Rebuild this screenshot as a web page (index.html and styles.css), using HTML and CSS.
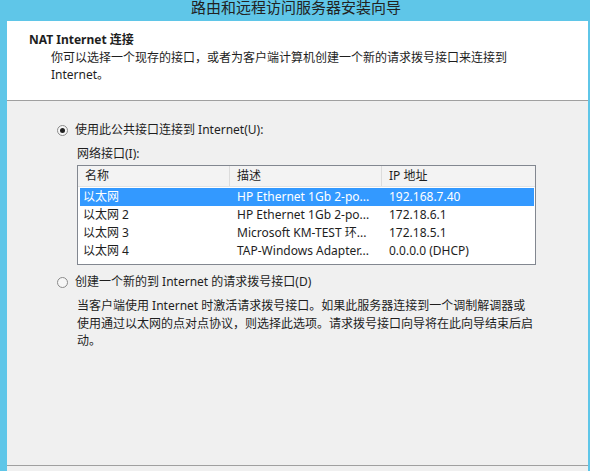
FILE: index.html
```html
<!doctype html>
<html lang="zh-CN">

<head>
	<meta charset="UTF-8" />
	<meta name="viewport" content="width=device-width, initial-scale=1.0" />
	<title>路由和远程访问服务器安装向导</title>
	<link rel="stylesheet" href="styles.css">
</head>

<body>
	<div class="titlebar">路由和远程访问服务器安装向导</div>

	<div class="frame">
		<div class="header">
			<div class="heading">NAT Internet 连接</div>
			<div class="subtitle">你可以选择一个现存的接口，或者为客户端计算机创建一个新的请求拨号接口来连接到<br>Internet。</div>
		</div>

		<div class="content">
			<div class="option">
				<span class="radio checked"></span>
				<span>使用此公共接口连接到 Internet(U):</span>
			</div>

			<div class="group">
				<div class="group-label">网络接口(I):</div>

				<div class="listview">
					<div class="lv-header">
						<div class="lv-col">名称</div>
						<div class="lv-col">描述</div>
						<div class="lv-col">IP 地址</div>
					</div>
					<div class="lv-body">
						<div class="lv-row selected">
							<div>以太网</div>
							<div>HP Ethernet 1Gb 2-po...</div>
							<div>192.168.7.40</div>
						</div>
						<div class="lv-row">
							<div>以太网 2</div>
							<div>HP Ethernet 1Gb 2-po...</div>
							<div>172.18.6.1</div>
						</div>
						<div class="lv-row">
							<div>以太网 3</div>
							<div>Microsoft KM-TEST 环...</div>
							<div>172.18.5.1</div>
						</div>
						<div class="lv-row">
							<div>以太网 4</div>
							<div>TAP-Windows Adapter...</div>
							<div>0.0.0.0 (DHCP)</div>
						</div>
					</div>
				</div>
			</div>

			<div class="option option-second">
				<span class="radio"></span>
				<span>创建一个新的到 Internet 的请求拨号接口(D)</span>
			</div>

			<p class="note">当客户端使用 Internet 时激活请求拨号接口。如果此服务器连接到一个调制解调器或<br>使用通过以太网的点对点协议，则选择此选项。请求拨号接口向导将在此向导结束后启<br>动。</p>
		</div>

		<div class="footer"></div>
	</div>
</body>

</html>
```

FILE: styles.css
```css
body {
	margin: 0;
	height: 471px;
	overflow: hidden;
	background-color: #5fc6e8;
	font-family: "Noto Sans", "Noto Sans CJK SC", sans-serif;
	font-size: 12px;
	color: #1e1e1e;
}

.titlebar {
	height: 21px;
	line-height: 15px;
	font-size: 15px;
	text-align: center;
	color: #222;
	padding-left: 2px;
	box-sizing: border-box;
}

.frame {
	margin-left: 7px;
	margin-right: 2px;
	height: 450px;
	background-color: #f0f0f0;
	display: flex;
	flex-direction: column;
}

.header {
	height: 79px;
	box-sizing: border-box;
	background-color: #fff;
	border-bottom: 1px solid #a0a0a0;
	padding: 10px 0 0 22px;
	height: 80px;
}

.heading {
	font-weight: bold;
	line-height: 18px;
}

.subtitle {
	margin-left: 22px;
	line-height: 17px;
	white-space: nowrap;
}

.content {
	flex: 1;
	padding: 20px 0 0 50px;
}

.option {
	display: flex;
	align-items: center;
	gap: 7px;
	line-height: 18px;
}

.option-second {
	margin-top: 8px;
}

.radio {
	width: 11px;
	height: 11px;
	border: 1px solid #8a8a8a;
	border-radius: 50%;
	background-color: #f6f6f6;
	box-sizing: border-box;
	display: flex;
	align-items: center;
	justify-content: center;
}

.radio.checked::after {
	content: "";
	width: 5px;
	height: 5px;
	border-radius: 50%;
	background-color: #222;
}

.group {
	padding-left: 20px;
}

.group-label {
	margin-top: 6px;
	line-height: 18px;
}

.listview {
	margin-top: 2px;
	width: 459px;
	height: 100px;
	box-sizing: border-box;
	border: 1px solid #828790;
	background-color: #fff;
}

.lv-header {
	display: grid;
	grid-template-columns: 152px 152px 1fr;
	height: 21px;
	box-sizing: border-box;
	background-color: #f3f3f3;
	border-bottom: 1px solid #e3e3e3;
}

.lv-col {
	padding-left: 7px;
	line-height: 20px;
	border-right: 1px solid #dcdcdc;
}

.lv-col:last-child {
	border-right: none;
}

.lv-body {
	padding: 1px 1px 0 2px;
}

.lv-row {
	display: grid;
	grid-template-columns: 150px 152px 1fr;
	height: 18px;
	line-height: 18px;
}

.lv-row div {
	padding-left: 7px;
	white-space: nowrap;
	overflow: hidden;
}

.lv-row div:first-child {
	padding-left: 3px;
}

.lv-row.selected {
	background-color: #3399ff;
	color: #fff;
}

.note {
	margin: 6px 0 0 20px;
	line-height: 17.5px;
	white-space: nowrap;
}

.footer {
	height: 5px;
	border-top: 1px solid #a0a0a0;
}
```
